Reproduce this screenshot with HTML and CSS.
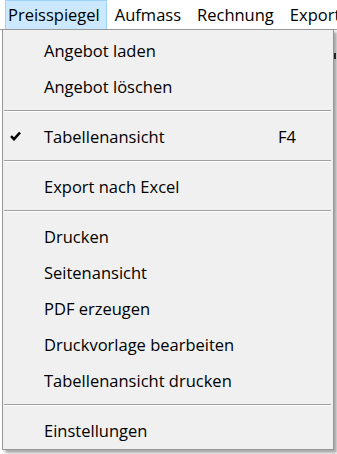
FILE: index.html
```html
<!DOCTYPE html>
<html lang="de">
<head>
    <meta charset="UTF-8">
    <title>Preisspiegel</title>
    <link rel="stylesheet" href="styles.css">
</head>
<body>
    <div class="menubar">
        <div class="menubar-item open">Preisspiegel</div>
        <div class="menubar-item">Aufmass</div>
        <div class="menubar-item">Rechnung</div>
        <div class="menubar-item">Export</div>
    </div>
    <div class="workspace">
        <div class="grip"></div>
    </div>

    <!-- Dropdown of "Preisspiegel" -->
    <div class="dropdown">
        <div class="item"><span class="check"></span><span class="label">Angebot laden</span></div>
        <div class="item"><span class="check"></span><span class="label">Angebot löschen</span></div>
        <div class="sep"></div>
        <div class="item">
            <span class="check">
                <svg width="11" height="10" viewBox="0 0 11 10"><path d="M1 5.2 L4 8.2 L10 1.5" fill="none" stroke="#000" stroke-width="2.6"/></svg>
            </span>
            <span class="label">Tabellenansicht</span>
            <span class="shortcut">F4</span>
        </div>
        <div class="sep"></div>
        <div class="item"><span class="check"></span><span class="label">Export nach Excel</span></div>
        <div class="sep"></div>
        <div class="item"><span class="check"></span><span class="label">Drucken</span></div>
        <div class="item"><span class="check"></span><span class="label">Seitenansicht</span></div>
        <div class="item"><span class="check"></span><span class="label">PDF erzeugen</span></div>
        <div class="item"><span class="check"></span><span class="label">Druckvorlage bearbeiten</span></div>
        <div class="item"><span class="check"></span><span class="label">Tabellenansicht drucken</span></div>
        <div class="sep"></div>
        <div class="item"><span class="check"></span><span class="label">Einstellungen</span></div>
    </div>
</body>
</html>
```

FILE: styles.css
```css
body {
    margin: 0;
    background: #fff;
    font-family: "Open Sans", "Noto Sans", sans-serif;
    font-size: 16.5px;
    color: #000;
    overflow: hidden;
}
.menubar {
    display: flex;
    height: 29px;
    align-items: stretch;
    padding-left: 1px;
    white-space: nowrap;
}
.menubar-item {
    display: flex;
    align-items: center;
    padding: 0 7px 1px 7px;
    border: 1px solid transparent;
    border-bottom: 0;
}
.menubar-item.open {
    margin-left: 4px;
    padding-left: 2px;
    padding-right: 6px;
    background: #cce8ff;
    border-color: #99d1ff;
}
.workspace {
    height: 425px;
    border-top: 1px solid #a0a0a0;
    position: relative;
}
.grip {
    position: absolute;
    right: 1px;
    top: 23px;
    width: 2px;
    height: 6px;
    background: #333;
}

/* Dropdown menu */
.dropdown {
    position: absolute;
    left: 2px;
    top: 29px;
    width: 330px;
    padding: 2px 0 1px 0;
    background: #f0f0f0;
    border: 1px solid #979797;
    box-shadow: 3px 3px 3px rgba(0, 0, 0, 0.35);
}
.item {
    display: flex;
    align-items: center;
    height: 36px;
}
.check {
    width: 41px;
    display: flex;
    justify-content: center;
    padding-right: 16px;
    box-sizing: border-box;
}
.label {
    flex: 1;
}
.shortcut {
    padding-right: 37px;
}
.sep {
    height: 1px;
    margin: 6px 2px 6px 1px;
    border-top: 1px solid #a0a0a0;
    background: #fff;
}
```
